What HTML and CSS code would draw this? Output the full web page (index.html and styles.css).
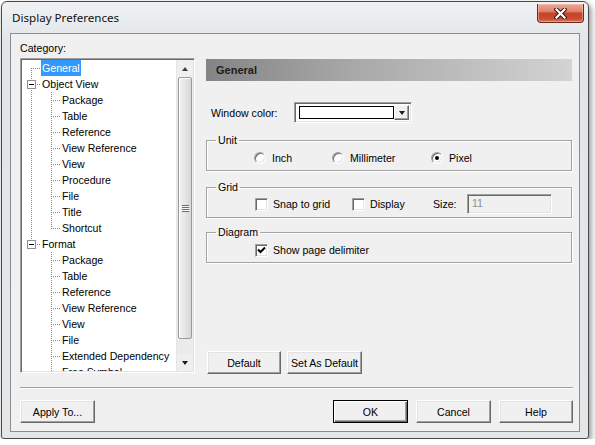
FILE: index.html
```html
<!DOCTYPE html>
<html>
<head>
<meta charset="utf-8">
<title>Display Preferences</title>
<link rel="stylesheet" href="styles.css">
</head>
<body>
<div class="window">
  <div class="titlebar">
    <span class="title">Display Preferences</span>
    <span class="close">
      <svg width="13" height="11" viewBox="0 0 13 11">
        <path d="M2.5 1.5 L10.5 9.5 M10.5 1.5 L2.5 9.5" stroke="#3a1410" stroke-width="4.2" stroke-linecap="square"/>
        <path d="M2.5 1.5 L10.5 9.5 M10.5 1.5 L2.5 9.5" stroke="#ffffff" stroke-width="2.2" stroke-linecap="square"/>
      </svg>
    </span>
  </div>
  <div class="client">
    <div class="main">
      <div class="left">
        <div class="cat-label">Category:</div>
        <div class="treebox">
          <div class="tree">
            <ul class="level">
              <li class="item l0"><span class="sel">General</span></li>
              <li class="item l0 parent"><span class="box"></span>Object View</li>
              <li>
                <ul class="kids">
                  <li class="item l1">Package</li>
                  <li class="item l1">Table</li>
                  <li class="item l1">Reference</li>
                  <li class="item l1">View Reference</li>
                  <li class="item l1">View</li>
                  <li class="item l1">Procedure</li>
                  <li class="item l1">File</li>
                  <li class="item l1">Title</li>
                  <li class="item l1">Shortcut</li>
                </ul>
              </li>
              <li class="item l0 parent"><span class="box"></span>Format</li>
              <li>
                <ul class="kids open-end">
                  <li class="item l1">Package</li>
                  <li class="item l1">Table</li>
                  <li class="item l1">Reference</li>
                  <li class="item l1">View Reference</li>
                  <li class="item l1">View</li>
                  <li class="item l1">File</li>
                  <li class="item l1">Extended Dependency</li>
                  <li class="item l1">Free Symbol</li>
                </ul>
              </li>
            </ul>
          </div>
          <div class="scrollbar">
            <div class="sb-btn"><span class="tri-up"></span></div>
            <div class="sb-track">
              <div class="sb-thumb"><span class="grip"></span></div>
            </div>
            <div class="sb-btn"><span class="tri-down"></span></div>
          </div>
        </div>
      </div>
      <div class="right">
        <div class="pane-header">General</div>
        <div class="color-row">
          <span class="color-label">Window color:</span>
          <div class="combo">
            <span class="swatch"></span>
            <span class="drop"><span class="tri-down"></span></span>
          </div>
        </div>
        <fieldset class="group">
          <legend>Unit</legend>
          <div class="opts unit-opts">
            <label class="opt w78"><span class="radio"></span>Inch</label>
            <label class="opt w99"><span class="radio"></span>Millimeter</label>
            <label class="opt"><span class="radio on"></span>Pixel</label>
          </div>
        </fieldset>
        <fieldset class="group grid-group">
          <legend>Grid</legend>
          <div class="opts grid-opts">
            <label class="opt w97"><span class="check"></span>Snap to grid</label>
            <label class="opt w81"><span class="check"></span>Display</label>
            <span class="size-label">Size:</span>
            <span class="size-field">11</span>
          </div>
        </fieldset>
        <fieldset class="group diagram-group">
          <legend>Diagram</legend>
          <div class="opts">
            <label class="opt"><span class="check">
              <svg width="9" height="9" viewBox="0 0 9 9"><path d="M1 3.5 L3.5 6 L8 1.5" fill="none" stroke="#000" stroke-width="2"/></svg>
            </span>Show page delimiter</label>
          </div>
        </fieldset>
        <div class="def-buttons">
          <button class="btn w74">Default</button>
          <button class="btn w75">Set As Default</button>
        </div>
      </div>
    </div>
    <div class="separator"></div>
    <div class="footer">
      <button class="btn w75">Apply To...</button>
      <div class="footer-right">
        <button class="btn btn-default w75">OK</button>
        <button class="btn w75">Cancel</button>
        <button class="btn w74">Help</button>
      </div>
    </div>
  </div>
</div>
</body>
</html>
```

FILE: styles.css
```css
* { box-sizing: border-box; }
html, body { margin: 0; padding: 0; background: #ffffff; }
body {
  font-family: "Liberation Sans", Arial, sans-serif;
  font-size: 10.6px;
  color: #000;
}

.window {
  margin: 1px 0 0 1px;
  width: 588px;
  height: 438px;
  border: 1px solid #4a4a4a;
  border-radius: 6px 6px 3px 3px;
  background: linear-gradient(#eff1f3, #e3e6e9 40px, #e4e6e8);
  box-shadow: 2px 3px 6px rgba(0, 0, 0, 0.45);
  display: flex;
  flex-direction: column;
}

.titlebar {
  height: 31px;
  display: flex;
  align-items: center;
  padding-left: 10px;
  flex: none;
}
.title {
  font-family: "Noto Sans", "Open Sans", sans-serif;
  font-size: 11.6px;
  color: #111;
  flex: 1;
}
.close {
  align-self: flex-start;
  margin: 2px 4px 0 0;
  width: 47px;
  height: 19px;
  border: 1px solid #6b2a1f;
  border-top: none;
  border-radius: 0 0 4px 4px;
  background: linear-gradient(#eaa897 0%, #e08570 40%, #c9432a 52%, #c84a31 80%, #d9765c 100%);
  box-shadow: inset 0 0 0 1px rgba(255, 210, 200, 0.45);
  display: flex;
  align-items: center;
  justify-content: center;
}
.close svg { display: block; }

.client {
  flex: 1;
  margin: 0 8px 6px 8px;
  border: 1px solid #8d8d8d;
  background: #f0f0f0;
  display: flex;
  flex-direction: column;
}

.main {
  flex: 1;
  display: flex;
  padding: 8px 6px 13px 9px;
}

.left {
  width: 175px;
  display: flex;
  flex-direction: column;
}
.cat-label { line-height: 13px; height: 13px; }

.treebox {
  margin-top: 3px;
  height: 315px;
  border: 1px solid;
  border-color: #a0a0a0 #ffffff #ffffff #a0a0a0;
  box-shadow: inset 1px 1px 0 #696969, inset -1px -1px 0 #e3e3e3;
  padding: 1px;
  display: flex;
  background: #fff;
}

.tree {
  flex: 1;
  position: relative;
  overflow: hidden;
  background: #fff;
}
.tree ul { list-style: none; margin: 0; padding: 0; }
.level { position: relative; }
.level::after {
  content: "";
  position: absolute;
  left: 9px;
  top: 8px;
  width: 1px;
  height: 177px;
  background: repeating-linear-gradient(to bottom, #8a8a8a 0 1px, transparent 1px 2px);
}
.item {
  position: relative;
  height: 16px;
  line-height: 16px;
  white-space: nowrap;
}
.l0 { padding-left: 20px; }
.l1 { padding-left: 40px; }
.item::before {
  content: "";
  position: absolute;
  top: 8px;
  height: 1px;
  width: 10px;
  background: repeating-linear-gradient(to right, #8a8a8a 0 1px, transparent 1px 2px);
}
.l0::before { left: 9px; }
.l1::before { left: 29px; }
.kids { position: relative; }
.kids::after {
  content: "";
  position: absolute;
  left: 29px;
  top: 0;
  bottom: 8px;
  width: 1px;
  background: repeating-linear-gradient(to bottom, #8a8a8a 0 1px, transparent 1px 2px);
}
.kids.open-end::after { bottom: 0; }
.sel {
  display: inline-block;
  margin-left: -1px;
  padding: 0 1px;
  height: 16px;
  background: #3399ff;
  color: #fff;
}
.box {
  position: absolute;
  left: 5px;
  top: 4px;
  width: 9px;
  height: 9px;
  border: 1px solid #8f8f8f;
  background: #fff;
  z-index: 1;
}
.box::after {
  content: "";
  position: absolute;
  left: 1px;
  top: 3px;
  width: 5px;
  height: 1px;
  background: #000;
}

.scrollbar {
  width: 17px;
  display: flex;
  flex-direction: column;
  background: #ebebeb;
  border-left: 1px solid #e6e6e6;
}
.sb-btn {
  height: 17px;
  display: flex;
  align-items: center;
  justify-content: center;
  background: #efefef;
}
.tri-up {
  width: 0; height: 0;
  border-left: 3.5px solid transparent;
  border-right: 3.5px solid transparent;
  border-bottom: 4px solid #3c3c3c;
}
.tri-down {
  width: 0; height: 0;
  border-left: 3.5px solid transparent;
  border-right: 3.5px solid transparent;
  border-top: 4px solid #1e1e1e;
}
.sb-track { flex: 1; display: flex; flex-direction: column; padding: 0 1px 15px 1px; }
.sb-thumb {
  flex: 1;
  border: 1px solid #9a9a9a;
  border-radius: 2px;
  background: linear-gradient(to right, #f4f4f4, #e6e6e6 50%, #d6d6d6);
  box-shadow: inset 1px 1px 0 #fff;
  display: flex;
  align-items: center;
  justify-content: center;
}
.grip {
  width: 7px;
  height: 7px;
  background: repeating-linear-gradient(to bottom, #6e6e6e 0 1px, #f6f6f6 1px 2px);
}

.right {
  width: 366px;
  margin-left: 11px;
  margin-top: 17px;
  display: flex;
  flex-direction: column;
}
.pane-header {
  height: 22px;
  line-height: 22px;
  padding-left: 10px;
  font-weight: bold;
  font-size: 11px;
  color: #1c1c1c;
  background: linear-gradient(to right, #848484, #a8a8a8 40%, #d3d3d3);
}

.color-row {
  margin-top: 21px;
  height: 21px;
  display: flex;
  align-items: center;
}
.color-label { width: 88px; padding-left: 5px; }
.combo {
  width: 118px;
  height: 21px;
  border: 1px solid;
  border-color: #a0a0a0 #ffffff #ffffff #a0a0a0;
  box-shadow: inset 1px 1px 0 #696969, inset -1px -1px 0 #e3e3e3;
  background: #fff;
  padding: 2px 2px 2px 2px;
  display: flex;
  align-items: stretch;
}
.swatch {
  width: 96px;
  margin: 1px 0 1px 2px;
  border: 1px solid #000;
  background: #fff;
}
.drop {
  margin-left: auto;
  width: 15px;
  border: 1px solid;
  border-color: #ffffff #696969 #696969 #ffffff;
  box-shadow: inset -1px -1px 0 #a0a0a0;
  background: #f0f0f0;
  display: flex;
  align-items: center;
  justify-content: center;
}

.group {
  margin: 11px 0 0 0;
  padding: 4px 0 5px 0;
  border: 1px solid #a3a3a3;
  box-shadow: inset 1px 1px 0 #fff, 1px 1px 0 #fff;
  min-width: 0;
}
.group legend {
  margin-left: 9px;
  padding: 0 2px;
  line-height: 13px;
}
.grid-group { margin-top: 10px; padding: 0 0 3px 0; }
.diagram-group { margin-top: 8px; }

.opts {
  display: flex;
  align-items: center;
  padding-left: 47px;
  min-height: 14px;
}
.grid-opts { padding-left: 48px; height: 20px; }
.diagram-group .opts { padding-left: 48px; }
.opt { display: flex; align-items: center; white-space: nowrap; }
.w78 { width: 78px; }
.w99 { width: 99px; }
.w97 { width: 97px; }
.w81 { width: 81px; }

.radio {
  position: relative;
  width: 12px;
  height: 12px;
  margin-right: 6px;
  border-radius: 50%;
  border: 1px solid;
  border-color: #a0a0a0 #ffffff #ffffff #a0a0a0;
  box-shadow: inset 1px 1px 0 #696969, inset -1px -1px 0 #e3e3e3;
  background: #fff;
  flex: none;
}
.radio.on::after {
  content: "";
  position: absolute;
  left: 3px;
  top: 3px;
  width: 4px;
  height: 4px;
  border-radius: 50%;
  background: #000;
}
.check {
  width: 13px;
  height: 13px;
  margin-right: 5px;
  border: 1px solid;
  border-color: #a0a0a0 #ffffff #ffffff #a0a0a0;
  box-shadow: inset 1px 1px 0 #696969, inset -1px -1px 0 #e3e3e3;
  background: #fff;
  flex: none;
  display: flex;
  align-items: center;
  justify-content: center;
}
.check svg { display: block; }
.size-label { width: 34px; }
.size-field {
  width: 85px;
  height: 20px;
  line-height: 16px;
  padding-left: 4px;
  color: #8e8e8e;
  border: 1px solid;
  border-color: #a0a0a0 #ffffff #ffffff #a0a0a0;
  box-shadow: inset 1px 1px 0 #696969, inset -1px -1px 0 #e3e3e3;
  background: #f0f0f0;
}

.def-buttons {
  margin-top: auto;
  display: flex;
  gap: 6px;
  padding-left: 1px;
}

.btn {
  height: 23px;
  padding: 0;
  font-family: "Liberation Sans", Arial, sans-serif;
  font-size: 10.6px;
  color: #000;
  background: #f0f0f0;
  border: 1px solid;
  border-color: #ffffff #696969 #696969 #ffffff;
  box-shadow: inset -1px -1px 0 #a0a0a0, inset 1px 1px 0 #e3e3e3;
  border-radius: 0;
}
.btn-default {
  border: 1px solid #000;
  box-shadow: inset 1px 1px 0 #fff, inset -1px -1px 0 #696969, inset -2px -2px 0 #a0a0a0;
}
.w74 { width: 74px; }
.w75 { width: 75px; }

.separator {
  height: 2px;
  margin: 0 6px 0 9px;
  border-top: 1px solid #a0a0a0;
  border-bottom: 1px solid #ffffff;
}
.footer {
  display: flex;
  padding: 11px 6px 8px 9px;
}
.footer-right {
  margin-left: auto;
  display: flex;
  gap: 8px;
}
```
